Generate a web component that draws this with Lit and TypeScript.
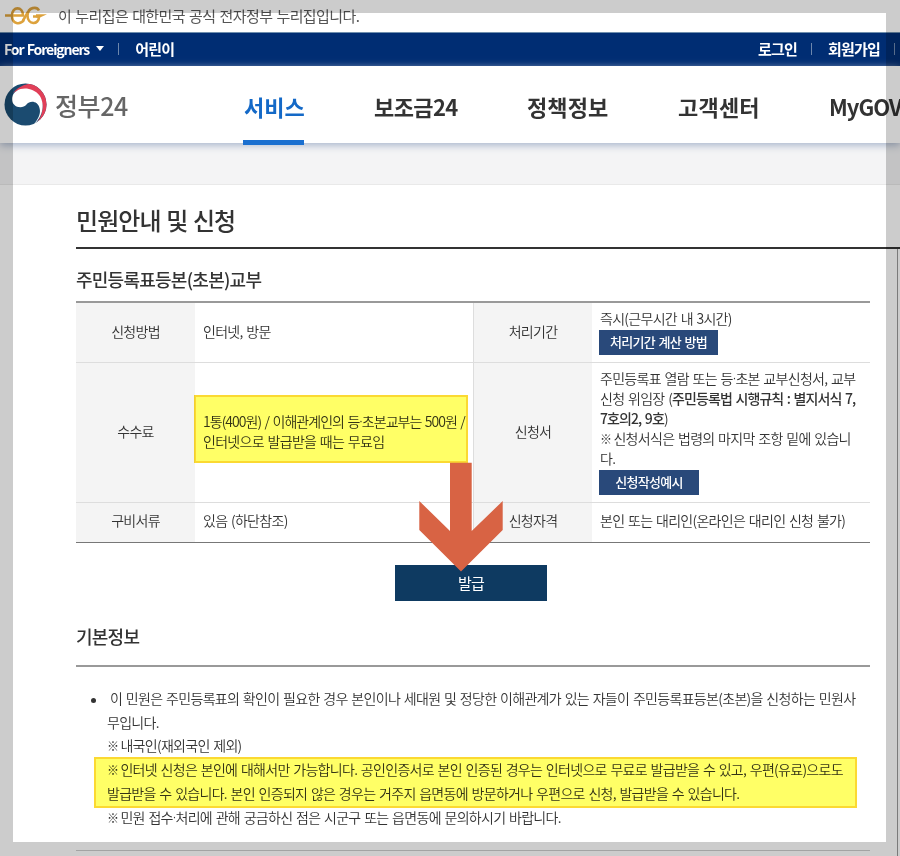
import { LitElement, html, css } from "lit";
import { customElement } from "lit/decorators.js";

@customElement("app-root")
export class AppRoot extends LitElement {
  static styles = css`
    :host {
      display: block;
      position: relative;
      width: 900px;
      height: 856px;
      overflow: hidden;
      background: #fff;
      color: #333;
      font: 350 14px/20px "Noto Sans CJK KR", sans-serif;
      letter-spacing: -0.7px;
      word-spacing: 1.2px;
      white-space: nowrap;
    }
    * { box-sizing: border-box; }
    h1, h2, p { margin: 0; padding: 0; }
    .notice {
      display: flex;
      align-items: center;
      height: 33px;
      padding: 0 0 0 4px;
      font-size: 15px;
      font-weight: 400;
      letter-spacing: -0.57px;
      color: #555;
      border-bottom: 1px solid #6f8fae;
    }
    .eg { width: 44px; height: 20px; margin-right: 10px; }
    .util {
      display: flex;
      align-items: center;
      height: 33px;
      padding: 0 0 2px 4px;
      background: #002d73;
      color: #fff;
      font-size: 15px;
      font-weight: 700;
      letter-spacing: -0.8px;
    }
    .foreign { font-size: 14px; letter-spacing: -1.1px; }
    .caret {
      margin-left: 7px;
      border: 4px solid transparent;
      border-top: 5px solid #fff;
      border-bottom: 0;
    }
    .bar { width: 1px; height: 12px; background: #6d87ad; }
    .b1 { margin: 0 16px 0 14px; }
    .login { margin-left: auto; }
    .b2 { margin: 0 16px 0 14px; }
    .b3 { margin: 0 5px 0 14px; }
    .head {
      position: relative;
      display: flex;
      align-items: center;
      height: 77px;
      padding: 0 0 0 4px;
      background: #fff;
      box-shadow: 0 2px 8px #a3b1c9;
      font-size: 22px;
      font-weight: 700;
      letter-spacing: 0;
    }
    .mark { flex: none; width: 43px; height: 43px; margin-right: 8px; }
    .brand {
      flex: none;
      width: 188px;
      font-size: 25px;
      font-weight: 500;
      letter-spacing: -0.4px;
      color: #666;
    }
    .menu { display: flex; flex: none; height: 79px; align-self: flex-start; }
    .item { display: flex; flex: none; align-items: center; line-height: 77px; padding-top: 2px; }
    .i1 { width: 61px; margin-right: 70px; padding: 7px 0 0 1px; color: #1469c7; border-bottom: 5px solid #1a6fd0; }
    .i2 { width: 153px; letter-spacing: -0.6px; }
    .i3 { width: 151px; letter-spacing: 0.1px; }
    .i4 { width: 151px; letter-spacing: 0.2px; }
    .i5 { letter-spacing: -1px; }
    .band { height: 42px; background: #f4f4f5; border-bottom: 1px solid #e9e9e9; }
    .main { padding-left: 76px; }
    .title {
      height: 64px;
      border-bottom: 2px solid #333;
      font-size: 24px;
      line-height: 70px;
      font-weight: 500;
      letter-spacing: -0.95px;
    }
    .sub { font-size: 18px; font-weight: 500; letter-spacing: -0.75px; }
    .s1 { height: 52px; line-height: 61px; }
    .table {
      display: grid;
      width: 794px;
      grid-template-columns: 119px 278px 119px 278px;
      grid-template-rows: 60px 140px 39px;
      border-top: 2px solid #999;
      border-bottom: 1px solid #777;
    }
    .cell {
      display: flex;
      flex-direction: column;
      justify-content: center;
      padding: 0 0 3px 8px;
      border-bottom: 1px solid #ddd;
    }
    .cell.key { align-items: center; padding-left: 0; background: #f4f4f4; }
    .cell.top { justify-content: flex-start; padding-top: 5px; padding-bottom: 0; }
    .cell.last { border-bottom: 0; padding-bottom: 5px; }
    .key.inner { border-left: 1px solid #ddd; }
    .tight { letter-spacing: -0.95px; }
    .btn {
      width: 119px;
      height: 25px;
      margin-top: 2px;
      margin-left: -1px;
      background: #29497a;
      color: #fff;
      font-size: 13px;
      line-height: 23px;
      font-weight: 500;
      text-align: center;
    }
    .btn.short { width: 100px; }
    b { font-weight: 500; letter-spacing: -0.9px; }
    .mid { font-family: "Noto Sans", sans-serif; line-height: 1; }
    .ref { font-size: 12px; line-height: 1; letter-spacing: -2.2px; }
    .issue {
      width: 152px;
      height: 36px;
      margin: 22px 0 0 319px;
      background: #0e3a61;
      color: #fff;
      font-size: 15px;
      font-weight: 400;
      line-height: 35px;
      text-align: center;
    }
    .s2 { width: 794px; height: 66px; line-height: 70px; border-bottom: 2px solid #999; }
    .info { position: relative; padding: 20px 0 0 31px; line-height: 23.7px; }
    .first { padding-left: 3px; letter-spacing: -0.685px; }
    .dot { position: absolute; left: 15px; top: 31px; width: 5px; height: 5px; border-radius: 50%; background: #333; }
    .end { width: 794px; margin-top: 21px; border-top: 1px solid #ccc; }
    .side { position: absolute; left: 897px; top: 249px; width: 1px; height: 607px; background: #999; }
    .hl { position: absolute; background: #ffff66; border: 2px solid #fbd932; mix-blend-mode: multiply; }
    .h1 { left: 194px; top: 395px; width: 274px; height: 68px; }
    .h2 { left: 94px; top: 757px; width: 763px; height: 51px; }
    .arrow { position: absolute; left: 419px; top: 462px; width: 84px; height: 110px; }
    .frame { position: absolute; inset: 0; border: solid rgba(0, 0, 0, 0.2); border-width: 13px 14px 14px 13px; }
  `;

  render() {
    const mid = html`<span class="mid">·</span>`;
    const ref = html`<span class="ref">※</span>`;
    return html`
      <div class="notice">
        <svg class="eg" viewBox="0 0 44 20" fill="none" stroke="#dda23c" stroke-width="2.6">
          <path d="M1 9.5H19C19 0 8 0 8 9.5C8 18.5 16 19 20 14" />
          <path d="M35 4.5C33 0.5 24 0.5 23.5 9.5C23.5 19 35 19.5 35 10.5H29" />
          <path d="M32 8.2H43L36 11.5H32Z" fill="#dda23c" stroke="none" />
          <path d="M19 14.500L24 6" />
        </svg>
        <span>이 누리집은 대한민국 공식 전자정부 누리집입니다.</span>
      </div>
      <div class="util">
        <span class="foreign">For Foreigners</span><i class="caret"></i>
        <i class="bar b1"></i><span>어린이</span>
        <span class="login">로그인</span><i class="bar b2"></i><span>회원가입</span><i class="bar b3"></i>
      </div>
      <div class="head">
        <svg class="mark" viewBox="0 0 43 43">
          <defs><clipPath id="disc"><circle cx="21.5" cy="21.5" r="21" /></clipPath></defs>
          <g clip-path="url(#disc)">
            <rect width="43" height="43" fill="#1b4b70" />
            <path d="M9 10C19 -2 34 0 44 0V44H29C38 36 42 22 35 13C29 6 18 4 9 10Z" fill="#e13f58" />
            <path d="M8 15C10 4 27 2 35.5 12.5C42 22 38 36 28 43C35 36 37 30 35.5 25C34 18 26 17 22.5 21.5C18 27 7 24 8 15Z" fill="#fff" />
          </g>
        </svg>
        <span class="brand">정부24</span>
        <div class="menu">
          <span class="item i1">서비스</span><span class="item i2">보조금24</span><span class="item i3">정책정보</span
          ><span class="item i4">고객센터</span><span class="item i5">MyGOV</span>
        </div>
      </div>
      <div class="band"></div>
      <div class="main">
        <h1 class="title">민원안내 및 신청</h1>
        <h2 class="sub s1">주민등록표등본(초본)교부</h2>
        <div class="table">
          <div class="cell key">신청방법</div>
          <div class="cell">인터넷, 방문</div>
          <div class="cell key inner">처리기간</div>
          <div class="cell top"><span>즉시(근무시간 내 3시간)</span><span class="btn">처리기간 계산 방법</span></div>
          <div class="cell key">수수료</div>
          <div class="cell">
            <span class="tight">1통(400원) / 이해관계인의 등${mid}초본교부는 500원 /</span>
            <span>인터넷으로 발급받을 때는 무료임</span>
          </div>
          <div class="cell key inner">신청서</div>
          <div class="cell top">
            <span>주민등록표 열람 또는 등${mid}초본 교부신청서, 교부</span>
            <span>신청 위임장 (<b>주민등록법 시행규칙 : 별지서식 7,</b></span>
            <span><b>7호의2, 9호</b>)</span>
            <span>${ref} 신청서식은 법령의 마지막 조항 밑에 있습니</span>
            <span>다.</span>
            <span class="btn short">신청작성예시</span>
          </div>
          <div class="cell key last">구비서류</div>
          <div class="cell last">있음 (하단참조)</div>
          <div class="cell key inner last">신청자격</div>
          <div class="cell last">본인 또는 대리인(온라인은 대리인 신청 불가)</div>
        </div>
        <div class="issue">발급</div>
        <h2 class="sub s2">기본정보</h2>
        <div class="info">
          <i class="dot"></i>
          <p class="first">이 민원은 주민등록표의 확인이 필요한 경우 본인이나 세대원 및 정당한 이해관계가 있는 자들이 주민등록표등본(초본)을 신청하는 민원사</p>
          <p>무입니다.</p>
          <p>${ref} 내국인(재외국인 제외)</p>
          <p>${ref} 인터넷 신청은 본인에 대해서만 가능합니다. 공인인증서로 본인 인증된 경우는 인터넷으로 무료로 발급받을 수 있고, 우편(유료)으로도</p>
          <p>발급받을 수 있습니다. 본인 인증되지 않은 경우는 거주지 읍면동에 방문하거나 우편으로 신청, 발급받을 수 있습니다.</p>
          <p>${ref} 민원 접수${mid}처리에 관해 궁금하신 점은 시군구 또는 읍면동에 문의하시기 바랍니다.</p>
        </div>
        <div class="end"></div>
      </div>
      <div class="side"></div>
      <div class="hl h1"></div>
      <div class="hl h2"></div>
      <svg class="arrow" viewBox="0 0 84 110">
        <path d="M31 0.7H52.7V69L83.7 39V68L42 109.5L0.3 68V39L31 69Z" fill="#d86344" />
      </svg>
      <div class="frame"></div>
    `;
  }
}
